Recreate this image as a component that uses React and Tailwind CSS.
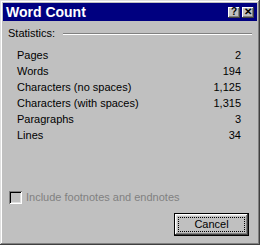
import React from 'react';

const stats = [
  ['Pages', '2'],
  ['Words', '194'],
  ['Characters (no spaces)', '1,125'],
  ['Characters (with spaces)', '1,315'],
  ['Paragraphs', '3'],
  ['Lines', '34'],
];

function CaptionButton({ children }) {
  return (
    <div className="w-[12px] h-[11px] bg-[#c0c0c0] flex items-center justify-center text-black font-bold text-[10px] leading-none shadow-[inset_-1px_-1px_#404040,inset_1px_1px_#fff,inset_-2px_-2px_#808080]">
      {children}
    </div>
  );
}

export default function App() {
  return (
    <div
      className="w-[260px] h-[245px] bg-[#c0c0c0] p-[3px] flex flex-col text-[11px] text-black shadow-[inset_-1px_-1px_#404040,inset_1px_1px_#dfdfdf,inset_-2px_-2px_#808080,inset_2px_2px_#fff]"
      style={{ fontFamily: '"Liberation Sans", Arial, sans-serif' }}
    >
      {/* Title bar */}
      <div className="h-[18px] bg-[#000080] flex items-center pl-[3px] pr-[3px]">
        <span className="text-white font-bold text-[14px] leading-none flex-1">Word Count</span>
        <div className="flex items-center gap-[2px]">
          <CaptionButton>?</CaptionButton>
          <CaptionButton>✕</CaptionButton>
        </div>
      </div>

      <div className="flex flex-col px-[5px]">
        {/* Statistics header */}
        <div className="mt-[6px] h-[13px] flex items-center">
          <span>Statistics:</span>
          <div className="flex-1 ml-[8px] border-t border-t-[#808080] border-b border-b-white" />
        </div>

        {/* Rows */}
        <div className="mt-[7px] pl-[9px] pr-[11px] flex flex-col">
          {stats.map(([label, value]) => (
            <div key={label} className="h-[16px] flex items-center justify-between">
              <span>{label}</span>
              <span>{value}</span>
            </div>
          ))}
        </div>

        {/* Checkbox (disabled) */}
        <div className="mt-[48px] h-[13px] flex items-center ml-[1px]">
          <div className="w-[13px] h-[13px] bg-[#c0c0c0] shadow-[inset_1px_1px_#808080,inset_-1px_-1px_#fff,inset_2px_2px_#000,inset_-2px_-2px_#dfdfdf]" />
          <span className="ml-[4px] text-[#808080]">Include footnotes and endnotes</span>
        </div>

        {/* Cancel */}
        <div className="mt-[9px] flex justify-end pr-[3px]">
          <button className="w-[75px] h-[23px] border border-black bg-[#c0c0c0] p-[3px] shadow-[inset_-1px_-1px_#404040,inset_1px_1px_#fff,inset_-2px_-2px_#808080,inset_2px_2px_#dfdfdf]">
            <div className="w-full h-full border border-dotted border-black flex items-center justify-center leading-none">
              Cancel
            </div>
          </button>
        </div>
      </div>
    </div>
  );
}
